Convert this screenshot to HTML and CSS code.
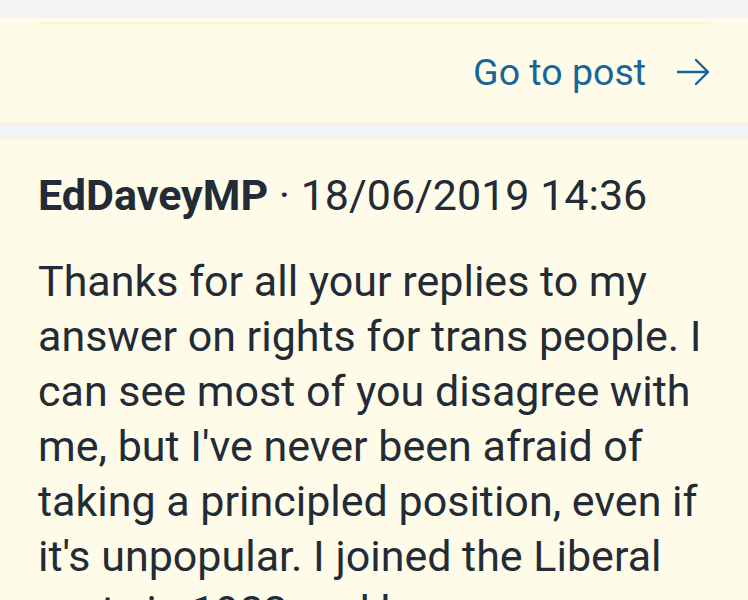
FILE: index.html
```html
<!DOCTYPE html>
<html>
<head>
<meta charset="utf-8">
<link rel="stylesheet" href="styles.css">
</head>
<body>
<div class="page">
  <div class="card card-top">
    <div class="divider"></div>
    <div class="goto-row">
      <a class="goto">Go to post</a>
      <svg class="arrow" width="34" height="30" viewBox="0 0 34 30" fill="none" stroke="#17659b" stroke-width="2.4" stroke-linecap="round" stroke-linejoin="round">
        <path d="M2 15 H32 M20 3 L32 15 L20 27"/>
      </svg>
    </div>
  </div>
  <div class="card card-post">
    <div class="meta"><span class="author">EdDaveyMP</span> · 18/06/2019 14:36</div>
    <p class="body">Thanks for all your replies to my answer on rights for trans people. I can see most of you disagree with me, but I've never been afraid of taking a principled position, even if it's unpopular. I joined the Liberal party in 1983 and have</p>
  </div>
</div>
</body>
</html>
```

FILE: styles.css
```css
html, body {
  margin: 0;
  padding: 0;
  background: #f2f3f5;
  overflow: hidden;
  height: 600px;
}
.page {
  padding-top: 18px;
  font-family: Roboto, "Noto Sans", sans-serif;
}
.card {
  background: #fefbe8;
}
.card-top {
  height: 106px;
  padding: 4px 38px 0 38px;
  border-bottom: 2px solid #fcf5d8;
  box-sizing: border-box;
}
.divider {
  height: 2px;
  background: #fcf4cc;
}
.goto-row {
  display: flex;
  justify-content: flex-end;
  align-items: center;
  gap: 30px;
  padding-top: 26px;
}
.goto {
  font-size: 37.5px;
  color: #17659b;
  line-height: 44px;
}
.arrow {
  display: block;
}
.card-post {
  margin-top: 14px;
  border-top: 2px solid #fcf5d8;
  padding: 30px 38px 0 38px;
  color: #222b36;
  min-height: 500px;
}
.meta {
  font-size: 43px;
  line-height: 50px;
}
.author {
  font-weight: 700;
}
.body {
  margin: 34px 0 0 0;
  font-size: 43px;
  line-height: 55px;
  width: 672px;
}
```
